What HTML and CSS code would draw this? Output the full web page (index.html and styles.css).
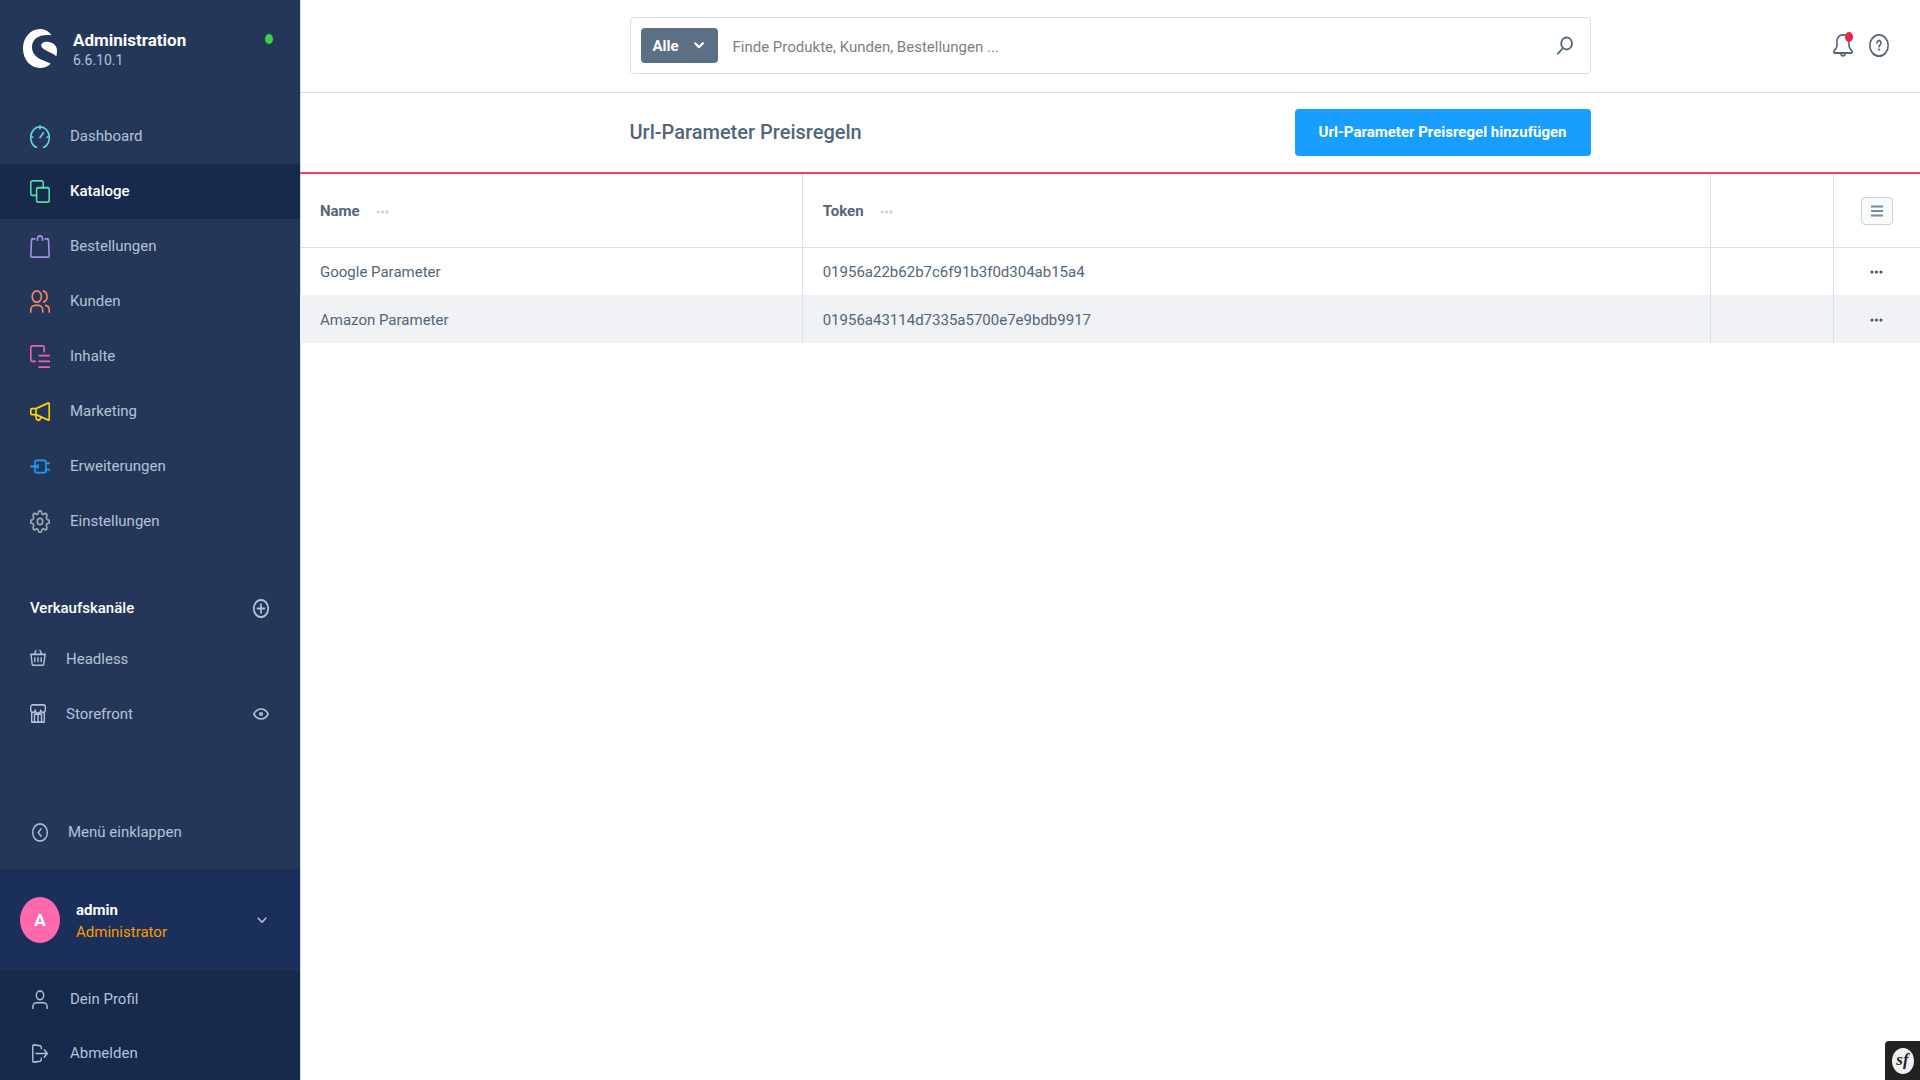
FILE: index.html
```html
<!DOCTYPE html>
<html lang="de">
<head>
<meta charset="utf-8">
<meta name="viewport" content="width=device-width, initial-scale=1">
<title>Url-Parameter Preisregeln</title>
<link rel="stylesheet" href="styles.css">
</head>
<body>
<div class="app">
  <aside class="sidebar">
    <header class="brand">
      <svg class="brand-logo" viewBox="0 0 34 39" aria-hidden="true"><path fill="#fff" d="M28 5.500C25 1.800 21 0 17 0 7.500 0 0 8.500 0 19.500S7.500 39 17 39c4 0 7.500-1.200 10-3.500.5-.5.4-1-.2-1.400C22 31.500 9 29.500 9 18 9 10 16 5 27.500 6.200c.7.100.9-.2.500-.7z"/><path fill="#fff" d="M33.900 20.500c-.4-4.500-4.900-7.500-9.900-7.700-3-.1-5.800 1.200-5.800 3.800 0 4.300 9.500 6.400 14.500 10.100.5.400.8.200.9-.4.3-1.900.4-3.800.3-5.800z"/></svg>
      <div class="brand-text">
        <strong class="brand-name">Administration</strong>
        <span class="brand-version">6.6.10.1</span>
      </div>
      <span class="status-dot"></span>
    </header>

    <nav class="menu">
      <a class="menu-item" href="#"><svg class="icon cyan" viewBox="0 0 20 20" preserveAspectRatio="none"><path d="M6.500 19.200H5.700A9.300 9.300 0 1 1 14.300 19.200H13.500M10 .8v2.400M.8 10.500h2M17.200 10.500h2M10 11l3.400-4.300"/></svg>Dashboard</a>
      <a class="menu-item active" href="#"><svg class="icon green" viewBox="0 0 20 20" preserveAspectRatio="none"><path d="M6.500 13.300H2.300A1.500 1.500 0 0 1 .8 11.800V2.300A1.500 1.500 0 0 1 2.300.8h9.400a1.500 1.500 0 0 1 1.500 1.500v4.200"/><rect x="6.600" y="6.700" width="12.600" height="12.500" rx="1.500"/></svg>Kataloge</a>
      <a class="menu-item" href="#"><svg class="icon violet" viewBox="0 0 20 20" preserveAspectRatio="none"><path d="M5 3.300H2.800a1.300 1.300 0 0 0-1.300 1.200L.8 17.800a1.300 1.300 0 0 0 1.300 1.400h15.800a1.300 1.300 0 0 0 1.300-1.400l-.7-13.300a1.300 1.300 0 0 0-1.300-1.200H15M7.500 4.500V3.200a2.500 2.500 0 0 1 5 0v1.300"/></svg>Bestellungen</a>
      <a class="menu-item" href="#"><svg class="icon orange" viewBox="0 0 20 20" preserveAspectRatio="none"><ellipse cx="6.800" cy="5.700" rx="4.600" ry="4.900"/><path d="M.8 19.200v-1.700a4.200 4.200 0 0 1 4.200-4.200h3.500a4.200 4.200 0 0 1 4.200 4.200v1.700M13.500.9a5 5 0 0 1 0 9.600M19.200 19.200v-1.700a4.200 4.200 0 0 0-3.500-4.200"/></svg>Kunden</a>
      <a class="menu-item" href="#"><svg class="icon pink" viewBox="0 0 20 20" preserveAspectRatio="none"><path d="M5.200 14.200H2.300A1.500 1.500 0 0 1 .8 12.700V2.300A1.500 1.500 0 0 1 2.300.8h10.400a1.500 1.500 0 0 1 1.500 1.500v3.500M9 9.200h10.400M9 14.200h10.400M9 19.200h10.400"/></svg>Inhalte</a>
      <a class="menu-item" href="#"><svg class="icon yellow" viewBox="0 0 20 20" preserveAspectRatio="none"><path d="M6 7.500H1.800a1 1 0 0 0-1 1v3.200a1 1 0 0 0 1 1H6zM6 7.500l12-4.800a.8.800 0 0 1 1.200.7v13.200a.8.800 0 0 1-1.200.7L6 12.700M6 12.700v2.500a2.400 2.400 0 0 0 4.600.8l.4-1.400"/></svg>Marketing</a>
      <a class="menu-item" href="#"><svg class="icon blue" viewBox="0 0 20 20" preserveAspectRatio="none"><rect x="5" y="4.700" width="11" height="10.600" rx="1.800"/><path d="M.8 10H8M8 8.700v2.600M16 7.300h3.300M16 12.700h3.300"/></svg>Erweiterungen</a>
      <a class="menu-item" href="#"><svg class="icon grey" viewBox="0 0 20 20" preserveAspectRatio="none"><path d="M8.500 1.800a1.600 1.600 0 0 1 3 0l.3.900a1.600 1.600 0 0 0 2.200.9l.8-.4a1.600 1.600 0 0 1 2.100 2.100l-.4.800a1.600 1.600 0 0 0 .9 2.200l.9.300a1.600 1.600 0 0 1 0 3l-.9.300a1.600 1.600 0 0 0-.9 2.200l.4.800a1.600 1.600 0 0 1-2.100 2.100l-.8-.4a1.600 1.600 0 0 0-2.200.9l-.3.900a1.600 1.600 0 0 1-3 0l-.3-.9a1.600 1.600 0 0 0-2.200-.9l-.8.400a1.600 1.600 0 0 1-2.100-2.100l.4-.8a1.600 1.600 0 0 0-.9-2.200l-.9-.3a1.600 1.600 0 0 1 0-3l.9-.3a1.600 1.600 0 0 0 .9-2.200l-.4-.8a1.600 1.600 0 0 1 2.100-2.100l.8.400a1.600 1.600 0 0 0 2.200-.9z"/><circle cx="10" cy="10" r="2.700"/></svg>Einstellungen</a>
    </nav>

    <section class="channels">
      <div class="channels-head">
        <h2 class="channels-title">Verkaufskanäle</h2>
        <button class="icon-button" type="button" aria-label="Verkaufskanal hinzufügen"><svg class="icon-small bold" viewBox="0 0 16 16" preserveAspectRatio="none"><circle cx="8" cy="8" r="7.200"/><path d="M8 4.500v7M4.500 8h7"/></svg></button>
      </div>
      <a class="channel" href="#"><svg class="icon-small" viewBox="0 0 16 16" preserveAspectRatio="none"><path d="M.7 4.500h14.600M1 4.700l1.200 8a1.200 1.200 0 0 0 1.200 1h9.200a1.200 1.200 0 0 0 1.200-1l1.200-8M4.200 4.500 6 1.300M11.800 4.500 10 1.300M4.800 7.500v3M8 7.500v3M11.200 7.500v3"/></svg>Headless</a>
      <div class="channel-row">
        <a class="channel" href="#"><svg class="icon-small" viewBox="0 0 16 16" preserveAspectRatio="none"><path d="M1.700 6.500v8.800h12.600V6.500M2.700.7h10.600a2 2 0 0 1 2 2v1.600a2.200 2.200 0 0 1-4.600.8 2.700 2.700 0 0 1-5.400 0 2.200 2.200 0 0 1-4.600-.8V2.700a2 2 0 0 1 2-2zM4.500 15.300V8.500h7v6.800M8 8.500v6.800"/></svg>Storefront</a>
        <button class="icon-button" type="button" aria-label="Storefront öffnen"><svg class="icon-eye" viewBox="0 0 16 12" preserveAspectRatio="none"><path d="M.8 6C2.500 2.800 5 1 8 1s5.500 1.800 7.200 5C13.500 9.200 11 11 8 11S2.500 9.200.8 6z"/><circle cx="8" cy="6" r="1.300"/></svg></button>
      </div>
    </section>

    <button class="collapse" type="button"><svg class="icon-small" viewBox="0 0 16 16" preserveAspectRatio="none"><circle cx="8" cy="8" r="7.300"/><path d="M9 5 6.200 8 9 11"/></svg>Menü einklappen</button>

    <button class="user" type="button">
      <span class="avatar">A</span>
      <span class="user-text"><strong class="user-name">admin</strong><span class="user-role">Administrator</span></span>
      <svg class="chevron" viewBox="0 0 10 7"><path d="M1.200 1.200 5 5.200l3.800-4"/></svg>
    </button>

    <nav class="user-menu">
      <a class="user-link" href="#"><svg class="icon-small" viewBox="0 0 16 16" preserveAspectRatio="none"><circle cx="8" cy="4.500" r="3.700"/><path d="M.9 15.500v-1.400a3.500 3.500 0 0 1 3.500-3.400h7.200a3.500 3.500 0 0 1 3.500 3.400v1.400"/></svg>Dein Profil</a>
      <a class="user-link" href="#"><svg class="icon-small" viewBox="0 0 16 16" preserveAspectRatio="none"><path d="M9.300 4V2.900a1.500 1.500 0 0 0-1.100-1.400L2 .8A1 1 0 0 0 .8 1.800v12.400a1 1 0 0 0 1.200 1l6.200-.7a1.500 1.500 0 0 0 1.100-1.400V12M4 8h11.200M12.300 5l3 3-3 3"/></svg>Abmelden</a>
    </nav>
  </aside>

  <main class="main">
    <header class="topbar">
      <form class="search">
        <button class="search-type" type="button">Alle<svg class="chevron thick" viewBox="0 0 10 7"><path d="M1.200 1.200 5 5.200l3.800-4"/></svg></button>
        <input class="search-input" type="text" aria-label="Suche" placeholder="Finde Produkte, Kunden, Bestellungen ...">
        <button class="icon-button" type="submit" aria-label="Suchen"><svg class="search-icon" viewBox="0 0 16 18"><ellipse cx="9.600" cy="7" rx="5.400" ry="6"/><path d="M6 11.500.9 17.200"/></svg></button>
      </form>
      <div class="actions">
        <button class="icon-button notify" type="button" aria-label="Benachrichtigungen"><svg class="icon slate" viewBox="0 0 20 20" preserveAspectRatio="none"><path d="M1.800 16.500h16.400a1 1 0 0 0 .8-1.600l-2-2.400a4 4 0 0 1-1-2.500V6.700A5.500 5.500 0 0 0 10.500.8h-1A5.500 5.500 0 0 0 4 6.700V10a4 4 0 0 1-1 2.500l-2 2.400a1 1 0 0 0 .8 1.600zM8 17a2 2 0 0 0 4 0"/></svg><span class="notify-dot"></span></button>
        <button class="icon-button" type="button" aria-label="Hilfe"><svg class="icon slate" viewBox="0 0 20 20" preserveAspectRatio="none"><circle cx="10" cy="10" r="9.200"/><path d="M8 7.800a2 2 0 1 1 3 1.700c-.7.400-1 .8-1 1.600M10 13.200v.8"/></svg></button>
      </div>
    </header>

    <div class="page-head">
      <div class="page-head-inner">
        <h1 class="page-title">Url-Parameter Preisregeln</h1>
        <button class="primary" type="button">Url-Parameter Preisregel hinzufügen</button>
      </div>
    </div>

    <table class="grid">
      <colgroup><col class="col-name"><col><col class="col-space"><col class="col-actions"></colgroup>
      <thead>
        <tr>
          <th>Name<svg class="dots pale" viewBox="0 0 13 4"><circle cx="2" cy="2" r="1.500"/><circle cx="6.500" cy="2" r="1.500"/><circle cx="11" cy="2" r="1.500"/></svg></th>
          <th>Token<svg class="dots pale" viewBox="0 0 13 4"><circle cx="2" cy="2" r="1.500"/><circle cx="6.500" cy="2" r="1.500"/><circle cx="11" cy="2" r="1.500"/></svg></th>
          <th></th>
          <th class="cell-action"><button class="grid-settings" type="button" aria-label="Spalten"><svg class="lines" viewBox="0 0 12 12"><path d="M0 1.500h12M0 6h12M0 10.500h12"/></svg></button></th>
        </tr>
      </thead>
      <tbody>
        <tr>
          <td>Google Parameter</td><td>01956a22b62b7c6f91b3f0d304ab15a4</td><td></td>
          <td class="cell-action"><button class="icon-button" type="button" aria-label="Aktionen"><svg class="dots" viewBox="0 0 13 4"><circle cx="2" cy="2" r="1.600"/><circle cx="6.500" cy="2" r="1.600"/><circle cx="11" cy="2" r="1.600"/></svg></button></td>
        </tr>
        <tr>
          <td>Amazon Parameter</td><td>01956a43114d7335a5700e7e9bdb9917</td><td></td>
          <td class="cell-action"><button class="icon-button" type="button" aria-label="Aktionen"><svg class="dots" viewBox="0 0 13 4"><circle cx="2" cy="2" r="1.600"/><circle cx="6.500" cy="2" r="1.600"/><circle cx="11" cy="2" r="1.600"/></svg></button></td>
        </tr>
      </tbody>
    </table>
  </main>
</div>
<button class="debug" type="button"><span class="debug-mark">sf</span></button>
</body>
</html>
```
FILE: styles.css
```css
* { box-sizing: border-box; }

body {
  margin: 0;
  background: #fff;
  color: #52667a;
  font: 15px/20px Roboto, "Liberation Sans", sans-serif;
}

button, input { font: inherit; color: inherit; }
button { border: 0; padding: 0; background: none; cursor: pointer; }
a { color: inherit; text-decoration: none; }
h1, h2 { margin: 0; }

svg { display: block; flex: none; fill: none; stroke: currentColor; stroke-width: 1.6; stroke-linecap: round; stroke-linejoin: round; }

.app { display: grid; grid-template-columns: 300px minmax(0, 1fr); min-height: 100vh; }

/* Sidebar */
.sidebar { display: flex; flex-direction: column; background: #243758; color: #b4c2d8; }

.brand { display: flex; align-items: center; gap: 16px; height: 94px; padding: 2px 27px 0 23px; }
.brand-logo { width: 34px; height: 39px; stroke: none; }
.brand-text { display: flex; flex: 1; flex-direction: column; padding-top: 4px; }
.brand-name { color: #fff; font-size: 17px; line-height: 20px; }
.brand-version { font-size: 14px; line-height: 20px; }
.status-dot { width: 8px; height: 10px; margin-bottom: 18px; border-radius: 50%; background: #37d046; }

.menu { margin-top: 15px; }
.menu-item { display: flex; align-items: center; gap: 20px; height: 55px; padding: 0 30px 1px; }
.menu-item.active { background: #172a4c; color: #fff; font-weight: 500; }

.icon { width: 20px; height: 23px; }
.icon-small { width: 16px; height: 19px; stroke-width: 1.4; }
.icon-small.bold { stroke-width: 1.7; }
.icon-eye { width: 16px; height: 12px; }
.icon-button { display: block; flex: none; }
.cyan { color: #64cfea; }
.green { color: #57d9a3; }
.violet { color: #a092f0; }
.orange { color: #f88962; }
.pink { color: #f55fb0; }
.yellow { color: #ffd700; }
.blue { color: #189eff; }
.grey { color: #9aa8b5; }
.slate { color: #52667a; }

.channels { margin-top: 36px; }
.channels-head, .channel-row { display: flex; align-items: center; justify-content: space-between; padding-right: 31px; }
.channels-head { height: 46px; padding-left: 30px; }
.channels-title { color: #fff; font-size: 15px; font-weight: 500; }
.channel { display: flex; align-items: center; gap: 20px; height: 55px; padding-left: 30px; }

.collapse { display: flex; align-items: center; gap: 20px; height: 74px; margin-top: auto; padding: 0 32px; }

.user { display: flex; align-items: center; gap: 16px; height: 102px; padding: 0 33px 0 20px; background: #1a305a; text-align: left; }
.avatar { display: grid; place-items: center; width: 40px; height: 46px; border-radius: 50%; background: #ff68ac; color: #fff; font-size: 17px; font-weight: 700; }
.user-text { display: flex; flex: 1; flex-direction: column; padding-top: 2px; }
.user-name { color: #fff; font-weight: 700; line-height: 22px; }
.user-role { color: #ff9a00; line-height: 22px; }
.chevron { width: 10px; height: 7px; }
.chevron.thick { stroke-width: 2.2; }

.user-menu { padding-top: 1px; background: #172a4c; }
.user-link { display: flex; align-items: center; gap: 22px; height: 54px; padding: 0 32px; }

/* Content */
.main { box-shadow: inset 1px 0 #d1d9e0; }

.topbar, .page-head { display: grid; grid-template-columns: minmax(0, 1fr) minmax(0, 961px) minmax(0, 1fr); align-items: center; }
.topbar { height: 93px; padding-bottom: 1px; border-bottom: 1px solid #d8dfe6; }
.search { display: flex; grid-column: 2; align-items: center; height: 57px; padding: 0 17px 0 10px; border: 1px solid #d8dfe6; border-radius: 4px; }
.search-type { display: flex; align-items: center; justify-content: space-between; width: 77px; height: 35px; padding: 0 14px 0 12px; border-radius: 4px; background: #5c7085; color: #fff; font-weight: 700; }
.search-input { flex: 1; min-width: 0; height: 40px; margin: 0 15px; padding: 2px 0 0; border: 0; outline: 0; background: none; }
.search-input::placeholder { color: #7f7f7f; opacity: 1; }
.search-icon { width: 16px; height: 19px; color: #52667a; stroke-width: 1.8; }

.actions { display: flex; justify-content: flex-end; gap: 16px; padding-right: 31px; }
.notify { position: relative; }
.notify-dot { position: absolute; top: -2px; right: 0; width: 8px; height: 10px; border-radius: 50%; background: #de294c; }

.page-head { height: 81px; padding-bottom: 1px; border-bottom: 2px solid #ff3d58; }
.page-head-inner { display: flex; grid-column: 2; align-items: center; justify-content: space-between; }
.page-title { color: #52667a; font-size: 20px; font-weight: 500; line-height: 28px; }
.primary { height: 47px; padding: 0 24px; border-radius: 4px; background: #189eff; color: #fff; font-weight: 700; }

.grid { width: 100%; border-collapse: collapse; table-layout: fixed; }
.col-name { width: 31%; }
.col-space { width: 123px; }
.col-actions { width: 87px; }
.grid th, .grid td { height: 48px; padding: 2px 20px 0; text-align: left; }
.grid th { height: 73px; border-bottom: 1px solid #d8dfe6; font-weight: 700; }
.grid th + th, .grid td + td { border-left: 1px solid #d8dfe6; }
.grid tbody tr:nth-child(even) { background: #f0f2f5; }
.grid .cell-action { padding: 2px 0 0; }
.cell-action button { margin: 0 auto; }
.dots { width: 13px; height: 4px; fill: #44586e; stroke: none; }
.dots.pale { display: inline-block; margin-left: 16px; vertical-align: middle; fill: #c5cfdb; }
.grid-settings { display: grid; place-items: center; width: 32px; height: 28px; border: 1px solid #c8d3de; border-radius: 4px; background: #f9fafb; }
.lines { width: 12px; height: 12px; color: #758ca3; stroke-width: 2; stroke-linecap: butt; }

.debug { position: fixed; right: 0; bottom: 0; display: grid; place-items: center; width: 35px; height: 39px; border-radius: 4px 0 0; background: #222; }
.debug-mark { width: 22px; height: 26px; border-radius: 50%; background: #f0f0f0; color: #222; font: italic 700 17px/24px "Liberation Serif", serif; text-align: center; }
```
